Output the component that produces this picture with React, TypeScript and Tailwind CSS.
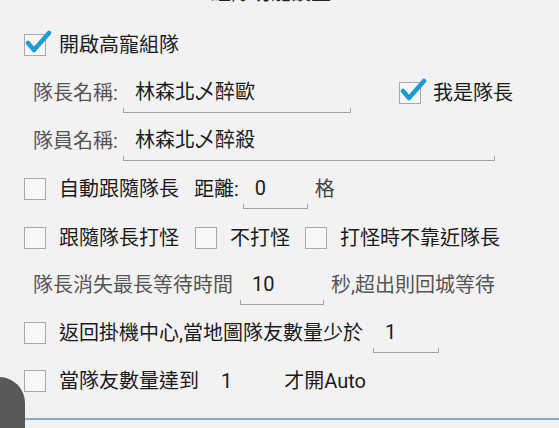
import React from 'react';

function CheckBox({ checked = false }: { checked?: boolean }) {
  return (
    <div className="relative w-[22px] h-[22px] border-[1.5px] border-[#a9a9a9] bg-[#f7f7f7] shrink-0">
      {checked && (
        <svg className="absolute -top-[6px] -left-[1px]" width="28" height="26" viewBox="0 0 28 26">
          <path d="M4 14 L10 21 L25 4" fill="none" stroke="#1f9bd4" strokeWidth="4.5" strokeLinecap="round" strokeLinejoin="round" />
        </svg>
      )}
    </div>
  );
}

function Field({ value, width, className = '' }: { value: string; width: number; className?: string }) {
  return (
    <div className={`relative flex flex-col shrink-0 ${className}`} style={{ width }}>
      <div className="px-[12px] leading-[28px] text-[#1b1b1b]">{value}</div>
      <div className="h-[5px] border-x border-b border-[#a4a4a4] mt-[2px]" />
    </div>
  );
}

function Row({ children, className = '' }: { children: React.ReactNode; className?: string }) {
  return <div className={`h-[48px] flex items-center ${className}`}>{children}</div>;
}

export default function App() {
  return (
    <div
      className="relative w-[559px] h-[428px] overflow-hidden bg-[#f2f2f2] text-[20px] text-[#1b1b1b]"
      style={{ fontFamily: 'Roboto, "Noto Sans CJK TC", sans-serif' }}
    >
      <div className="h-[392px] overflow-hidden">
        <div className="h-[21px] overflow-hidden">
          <div className="leading-[20px] mt-[-17px] ml-[211px] text-[#222]">組隊功能設置</div>
        </div>
        <div className="flex flex-col">
          <Row className="pl-[24px]">
            <CheckBox checked />
            <span className="ml-[13px]">開啟高寵組隊</span>
          </Row>
          <Row className="pl-[33px]">
            <span className="text-[#555] w-[90px]">隊長名稱:</span>
            <Field value="林森北乄醉歐" width={228} className="mt-[4px]" />
            <div className="ml-[48px] flex items-center">
              <CheckBox checked />
              <span className="ml-[12px]">我是隊長</span>
            </div>
          </Row>
          <Row className="pl-[33px]">
            <span className="text-[#555] w-[90px]">隊員名稱:</span>
            <Field value="林森北乄醉殺" width={372} className="mt-[4px]" />
          </Row>
          <Row className="pl-[24px]">
            <CheckBox />
            <span className="ml-[13px]">自動跟隨隊長</span>
            <span className="ml-[15px]">距離:</span>
            <Field value="0" width={65} className="ml-[4px] mt-[4px]" />
            <span className="ml-[7px] text-[#444]">格</span>
          </Row>
          <Row className="pl-[24px] pt-[2px]">
            <CheckBox />
            <span className="ml-[13px]">跟隨隊長打怪</span>
            <div className="ml-[16px]"><CheckBox /></div>
            <span className="ml-[13px]">不打怪</span>
            <div className="ml-[15px]"><CheckBox /></div>
            <span className="ml-[13px]">打怪時不靠近隊長</span>
          </Row>
          <Row className="pl-[33px]">
            <span className="text-[#555]">隊長消失最長等待時間</span>
            <Field value="10" width={84} className="ml-[7px] mt-[4px]" />
            <span className="ml-[7px] text-[#555]">秒,超出則回城等待</span>
          </Row>
          <Row className="pl-[24px]">
            <CheckBox />
            <span className="ml-[13px]">返回掛機中心,當地圖隊友數量少於</span>
            <Field value="1" width={66} className="ml-[10px] mt-[4px]" />
          </Row>
          <Row className="pl-[24px]">
            <CheckBox />
            <span className="ml-[13px]">當隊友數量達到</span>
            <span className="ml-[22px]">1</span>
            <span className="ml-[52px]">才開Auto</span>
          </Row>
        </div>
      </div>
      <div className="h-[28px] border-b-2 border-[#86acd6]" />
      <div className="absolute left-[-27px] top-[377px] w-[52px] h-[110px] rounded-full bg-[#595959]" />
    </div>
  );
}
